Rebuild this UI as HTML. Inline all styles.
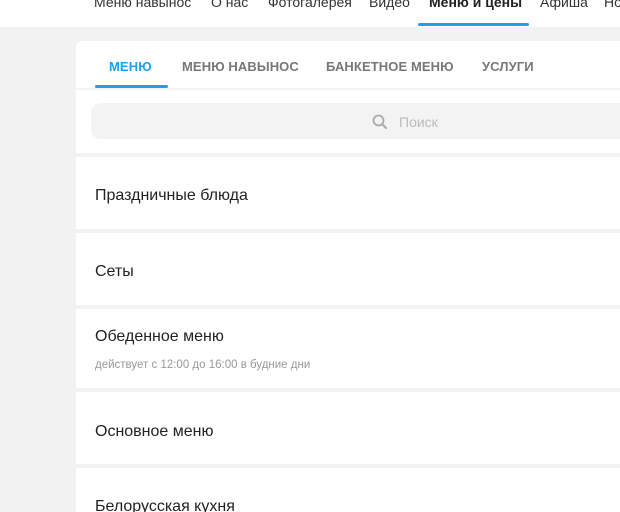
<!DOCTYPE html>
<html style="width:620px;height:512px;overflow:hidden"><head><meta charset="utf-8"><style>
*{margin:0;padding:0;box-sizing:border-box}
body{width:620px;height:512px;overflow:hidden;background:#f2f2f2;font-family:"Liberation Sans","DejaVu Sans",sans-serif;position:relative}
.hdr{position:absolute;left:0;top:0;width:620px;height:27px;background:#fff}
.n{position:absolute;top:-6px;font-size:14px;color:#333;white-space:nowrap}
.card{position:absolute;left:76px;top:41px;width:544px;height:471px;background:#fff;border-radius:6px 0 0 0}
.t{position:absolute;top:59px;font-size:13px;font-weight:bold;color:#777;letter-spacing:0.1px;white-space:nowrap}
.a{position:absolute;}
.sep{position:absolute;left:76px;width:544px;height:4px;background:#f2f2f2}
.i{position:absolute;left:95px;font-size:16px;color:#222;white-space:nowrap}
</style></head><body>
<div class="hdr"></div>
<div class="n" style="left:94px">Меню навынос</div>
<div class="n" style="left:211px">О нас</div>
<div class="n" style="left:268px">Фотогалерея</div>
<div class="n" style="left:369px">Видео</div>
<div class="n" style="left:429px;font-weight:bold;color:#222">Меню и цены</div>
<div class="n" style="left:540px">Афиша</div>
<div class="n" style="left:604px">Но</div>
<div class="a" style="left:418px;top:23px;width:111px;height:3px;background:#1aa3e8;border-radius:2px"></div>
<div class="card"></div>
<div class="t" style="left:109px;color:#1aa3e8">МЕНЮ</div>
<div class="t" style="left:182px">МЕНЮ НАВЫНОС</div>
<div class="t" style="left:326px">БАНКЕТНОЕ МЕНЮ</div>
<div class="t" style="left:482px">УСЛУГИ</div>
<div class="a" style="left:95px;top:85px;width:73px;height:3px;background:#1aa3e8;border-radius:2px"></div>
<div class="a" style="left:76px;top:88px;width:544px;height:2px;background:#f4f4f4"></div>
<div class="a" style="left:91px;top:103px;width:529px;height:36px;background:#f3f3f3;border-radius:10px 0 0 10px"></div>
<svg class="a" style="left:372px;top:114px" width="16" height="16" viewBox="0 0 16 16"><circle cx="6.5" cy="6.5" r="5" fill="none" stroke="#aaa" stroke-width="1.8"/><path d="M10.2 10.2L14 14" stroke="#aaa" stroke-width="2" stroke-linecap="round"/></svg>
<div class="a" style="left:399px;top:114px;font-size:14px;color:#bbb">Поиск</div>
<div class="sep" style="top:153px"></div>
<div class="i" style="top:187px">Праздничные блюда</div>
<div class="sep" style="top:229px"></div>
<div class="i" style="top:263px">Сеты</div>
<div class="sep" style="top:305px"></div>
<div class="i" style="top:328px">Обеденное меню</div>
<div class="a" style="left:95px;top:359px;font-size:11.5px;color:#999;white-space:nowrap">действует с 12:00 до 16:00 в будние дни</div>
<div class="sep" style="top:388px"></div>
<div class="i" style="top:423px">Основное меню</div>
<div class="sep" style="top:464px"></div>
<div class="i" style="top:498px">Белорусская кухня</div>
</body></html>
